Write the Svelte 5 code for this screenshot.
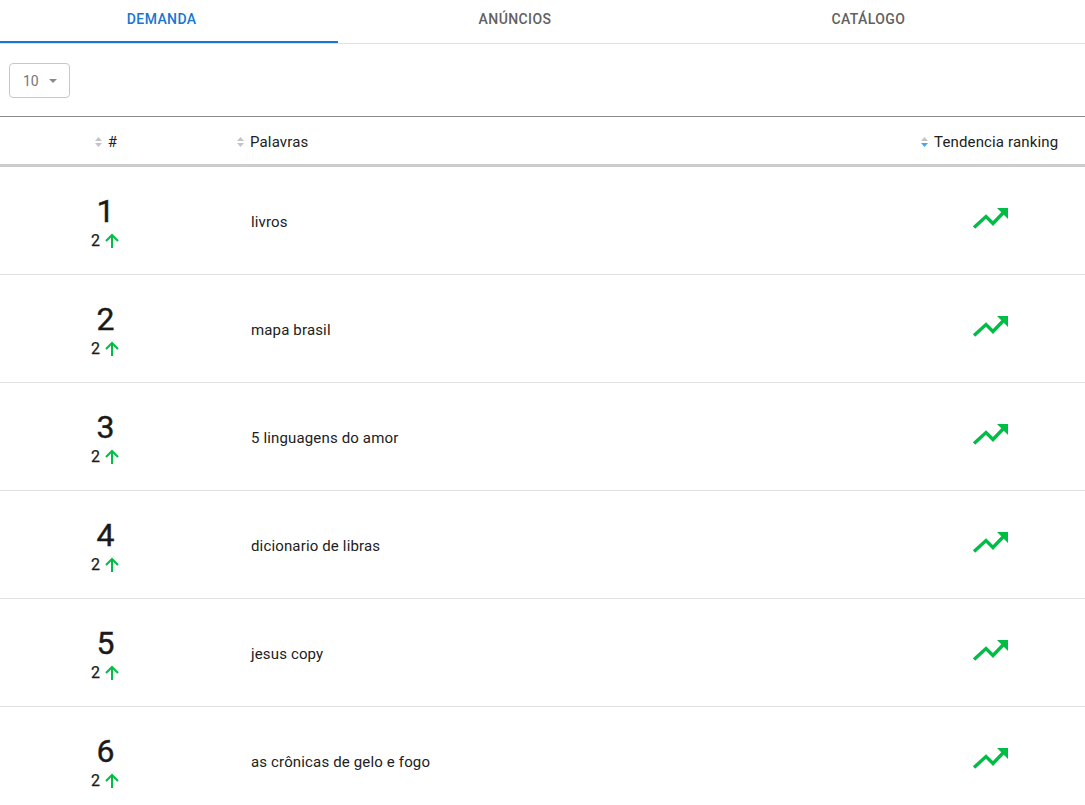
<script>
  const tabs = ['DEMANDA', 'ANÚNCIOS', 'CATÁLOGO'];
  const rows = [
    { rank: 1, word: 'livros' },
    { rank: 2, word: 'mapa brasil' },
    { rank: 3, word: '5 linguagens do amor' },
    { rank: 4, word: 'dicionario de libras' },
    { rank: 5, word: 'jesus copy' },
    { rank: 6, word: 'as crônicas de gelo e fogo' }
  ];
</script>

{#snippet sorter(active)}
  <svg class="sorter" width="7" height="10" viewBox="0 0 7 10">
    <path d="M3.5 0 L7 4 L0 4 Z" fill="#c4c4c4" />
    <path d="M0 6 L7 6 L3.5 10 Z" fill={active ? '#42a5f5' : '#c4c4c4'} />
  </svg>
{/snippet}

<main>
  <nav class="tabs">
    {#each tabs as tab, i}
      <div class="tab" class:active={i === 0}>{tab}</div>
    {/each}
  </nav>

  <div class="toolbar">
    <div class="select">
      <span>10</span>
      <svg width="8" height="4" viewBox="0 0 8 4"><path d="M0 0 L8 0 L4 4 Z" fill="#8a8a8a" /></svg>
    </div>
  </div>

  <div class="row head">
    <div class="col-rank"><span class="label">{@render sorter(false)}#</span></div>
    <div class="col-word"><span class="label">{@render sorter(false)}Palavras</span></div>
    <div class="col-trend"><span class="label">{@render sorter(true)}Tendencia ranking</span></div>
  </div>

  {#each rows as row}
    <div class="row item">
      <div class="col-rank">
        <div class="rank">{row.rank}</div>
        <div class="delta">
          2
          <svg width="16" height="16" viewBox="0 0 16 16">
            <path d="M8 15 V2 M2 8 L8 2 L14 8" fill="none" stroke="#00bd45" stroke-width="2" />
          </svg>
        </div>
      </div>
      <div class="col-word word">{row.word}</div>
      <div class="col-trend trend">
        <svg width="38" height="22" viewBox="0 0 38 22">
          <path d="M3 20.5 L15 9.5 L22 16.5 L32 6" fill="none" stroke="#00bd45" stroke-width="3.4" />
          <path d="M26 1 H37 V12 Z" fill="#00bd45" />
        </svg>
      </div>
    </div>
  {/each}
</main>

<style>
  :global(body) {
    margin: 0;
    background: #fff;
  }

  main {
    height: 805px;
    overflow: hidden;
    font-family: Roboto, sans-serif;
    color: #212121;
  }

  .tabs {
    display: flex;
    height: 44px;
    border-bottom: 1px solid #e0e0e0;
    box-sizing: border-box;
    overflow: hidden;
  }

  .tab {
    flex: 0 0 353.33px;
    box-sizing: border-box;
    height: 43px;
    padding-top: 11px;
    text-align: center;
    font-size: 14px;
    line-height: 17px;
    font-weight: 500;
    letter-spacing: 0.4px;
    color: #616161;
  }

  .tab:first-child {
    margin-left: -15px;
  }

  .tab.active {
    color: #1976d2;
    border-bottom: 2px solid #1976d2;
  }

  .toolbar {
    height: 73px;
    padding: 19px 0 0 9px;
    box-sizing: border-box;
    border-bottom: 1px solid #8a8a8a;
  }

  .select {
    width: 61px;
    height: 35px;
    box-sizing: border-box;
    border: 1px solid #c8c8c8;
    border-radius: 4px;
    display: flex;
    align-items: center;
    gap: 10px;
    padding-left: 13px;
    font-size: 14px;
    color: #757575;
  }

  .row {
    display: grid;
    grid-template-columns: 211px 1fr 137px;
    padding-right: 27px;
    align-items: center;
    letter-spacing: 0.15px;
  }

  .head {
    height: 50px;
    padding-top: 2px;
    border-bottom: 3px solid #cccccc;
    box-sizing: border-box;
    font-size: 15px;
  }

  .label {
    display: inline-flex;
    align-items: center;
    gap: 6px;
    white-space: nowrap;
  }

  .head .col-rank {
    text-align: center;
    padding-left: 1px;
  }

  .head .col-word {
    padding-left: 26px;
  }

  .item {
    height: 108px;
    border-bottom: 1px solid #e0e0e0;
    box-sizing: border-box;
  }

  .item .col-rank {
    text-align: center;
  }

  .rank {
    font-size: 32px;
    color: #1a1a1a;
    -webkit-text-stroke: 0.4px #1a1a1a;
    line-height: 38px;
    margin-top: 2px;
  }

  .delta {
    display: flex;
    justify-content: center;
    align-items: center;
    gap: 4px;
    margin-top: 1px;
    font-size: 16px;
    color: #1a1a1a;
    -webkit-text-stroke: 0.25px #1a1a1a;
    line-height: 20px;
  }

  .word {
    padding-left: 40px;
    padding-top: 2px;
    font-size: 15px;
  }

  .trend {
    text-align: center;
    line-height: 0;
    padding-bottom: 6px;
  }
</style>
